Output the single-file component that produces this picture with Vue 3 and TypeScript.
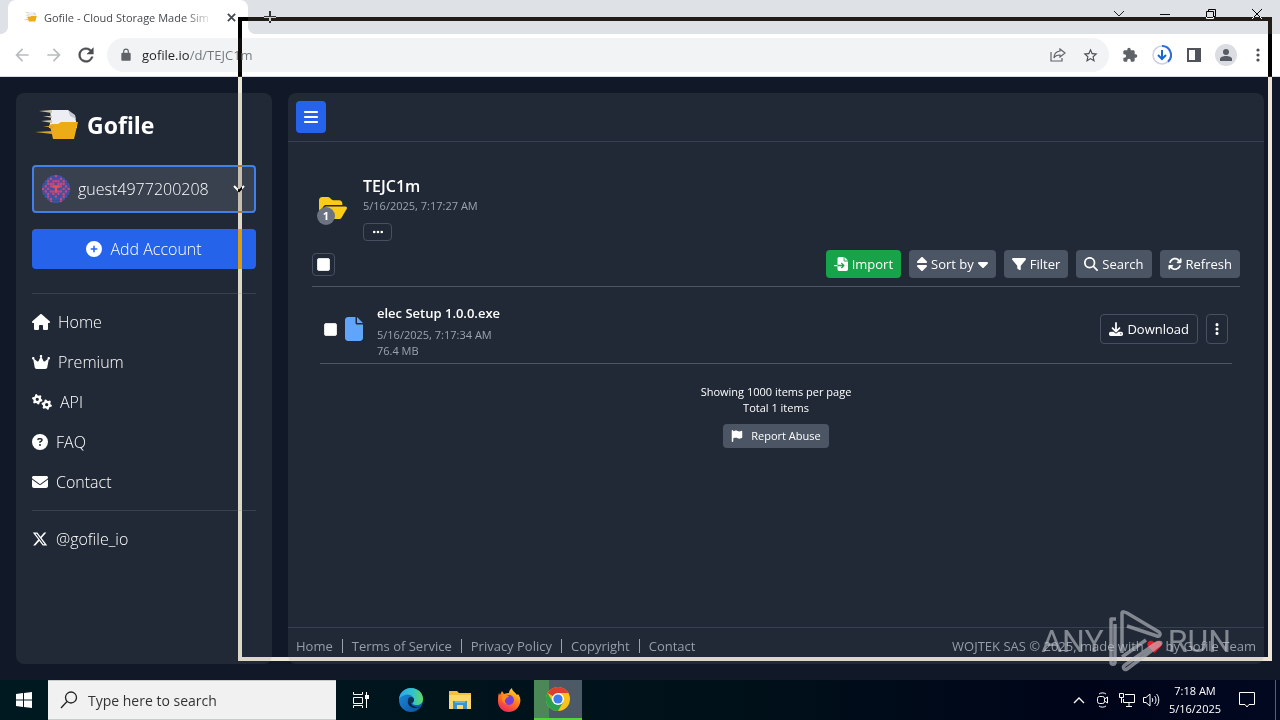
<script setup lang="ts">
import { h } from 'vue'

interface Glyph { w: number; d: string }

const glyphs: Record<string, Glyph> = {
  house: { w: 576, d: 'M575.8 255.5c0 18-15 32.1-32 32.1h-32l.7 160.2c0 2.7-.2 5.4-.5 8.1V472c0 22.1-17.9 40-40 40H456c-1.1 0-2.2 0-3.3-.1c-1.4 .1-2.8 .1-4.2 .1H416 392c-22.1 0-40-17.9-40-40V448 384c0-17.7-14.3-32-32-32H256c-17.7 0-32 14.3-32 32v64 24c0 22.1-17.9 40-40 40H160 128.1c-1.5 0-3-.1-4.5-.2c-1.2 .1-2.4 .2-3.6 .2H104c-22.1 0-40-17.9-40-40V360c0-.9 0-1.9 .1-2.8V287.6H32c-18 0-32-14-32-32.1c0-9 3-17 10-24L266.4 8c7-7 15-8 22-8s15 2 21 7L564.8 231.5c8 7 12 15 11 24z' },
  crown: { w: 576, d: 'M309 106c11.4-7 19-19.7 19-34c0-22.1-17.9-40-40-40s-40 17.9-40 40c0 14.4 7.6 27 19 34L209.7 220.6c-9.1 18.2-32.7 23.4-48.6 10.7L72 160c5-6.7 8-15 8-24c0-22.1-17.9-40-40-40S0 113.9 0 136s17.9 40 40 40c.2 0 .5 0 .7 0L86.4 427.4c5.5 30.4 32 52.6 63 52.6H426.6c30.9 0 57.4-22.1 63-52.6L535.3 176c.2 0 .5 0 .7 0c22.1 0 40-17.9 40-40s-17.9-40-40-40s-40 17.9-40 40c0 9 3 17.3 8 24l-89.1 71.3c-15.9 12.7-39.5 7.5-48.6-10.7L309 106z' },
  question: { w: 512, d: 'M256 512A256 256 0 1 0 256 0a256 256 0 1 0 0 512zM169.8 165.3c7.9-22.3 29.1-37.3 52.8-37.3h58.3c34.9 0 63.1 28.3 63.1 63.1c0 22.6-12.1 43.5-31.7 54.8L280 264.4c-.2 13-10.9 23.6-24 23.6c-13.3 0-24-10.7-24-24V250.5c0-8.6 4.6-16.5 12.1-20.8l44.3-25.4c4.7-2.7 7.6-7.7 7.6-13.1c0-8.4-6.8-15.1-15.1-15.1H222.6c-3.4 0-6.4 2.1-7.5 5.3l-.4 1.2c-4.4 12.5-18.2 19-30.6 14.6s-19-18.2-14.6-30.6l.4-1.2zM224 352a32 32 0 1 1 64 0 32 32 0 1 1 -64 0z' },
  envelope: { w: 512, d: 'M48 64C21.5 64 0 85.5 0 112c0 15.1 7.1 29.3 19.2 38.4L236.8 313.6c11.4 8.5 27 8.5 38.4 0L492.8 150.4c12.1-9.1 19.2-23.3 19.2-38.4c0-26.5-21.5-48-48-48H48zM0 176V384c0 35.3 28.7 64 64 64H448c35.3 0 64-28.7 64-64V176L294.4 339.2c-22.8 17.1-54 17.1-76.8 0L0 176z' },
  x: { w: 512, d: 'M389.2 48h70.6L305.6 224.2 487 464H345L233.7 318.6 106.5 464H35.8L200.7 275.5 26.8 48H172.4L272.9 180.9 389.2 48zM364.4 421.8h39.1L151.1 88h-42L364.4 421.8z' },
  plus: { w: 512, d: 'M256 512A256 256 0 1 0 256 0a256 256 0 1 0 0 512zM232 344V280H168c-13.3 0-24-10.7-24-24s10.7-24 24-24h64V168c0-13.3 10.7-24 24-24s24 10.7 24 24v64h64c13.3 0 24 10.7 24 24s-10.7 24-24 24H280v64c0 13.3-10.7 24-24 24s-24-10.7-24-24z' },
  bars: { w: 448, d: 'M0 96C0 78.3 14.3 64 32 64H416c17.7 0 32 14.3 32 32s-14.3 32-32 32H32C14.3 128 0 113.7 0 96zM0 256c0-17.7 14.3-32 32-32H416c17.7 0 32 14.3 32 32s-14.3 32-32 32H32c-17.7 0-32-14.3-32-32zM448 416c0 17.7-14.3 32-32 32H32c-17.7 0-32-14.3-32-32s14.3-32 32-32H416c17.7 0 32 14.3 32 32z' },
  sort: { w: 320, d: 'M137.4 41.4c12.5-12.5 32.8-12.5 45.3 0l128 128c9.2 9.2 11.9 22.9 6.9 34.9s-16.6 19.8-29.6 19.8H32c-12.9 0-24.6-7.8-29.6-19.8s-2.2-25.7 6.9-34.9l128-128zm0 429.3l-128-128c-9.2-9.2-11.9-22.9-6.9-34.9s16.6-19.8 29.6-19.8H288c12.9 0 24.6 7.8 29.6 19.8s2.2 25.7-6.9 34.9l-128 128c-12.5 12.5-32.8 12.5-45.3 0z' },
  caret: { w: 320, d: 'M137.4 374.6c12.5 12.5 32.8 12.5 45.3 0l128-128c9.2-9.2 11.9-22.9 6.9-34.9s-16.6-19.8-29.6-19.8L32 192c-12.9 0-24.6 7.8-29.6 19.8s-2.2 25.7 6.9 34.9l128 128z' },
  filter: { w: 512, d: 'M3.9 54.9C10.5 40.9 24.5 32 40 32H472c15.5 0 29.5 8.9 36.1 22.9s4.6 30.5-5.2 42.5L320 320.9V448c0 12.1-6.8 23.2-17.7 28.6s-23.8 4.3-33.5-3l-64-48c-8.1-6-12.8-15.5-12.8-25.6V320.9L9 97.3C-.7 85.4-2.8 68.8 3.9 54.9z' },
  search: { w: 512, d: 'M416 208c0 45.9-14.9 88.3-40 122.7L502.6 457.4c12.5 12.5 12.5 32.8 0 45.3s-32.8 12.5-45.3 0L330.7 376c-34.4 25.2-76.8 40-122.7 40C93.1 416 0 322.9 0 208S93.1 0 208 0S416 93.1 416 208zM208 352a144 144 0 1 0 0-288 144 144 0 1 0 0 288z' },
  refresh: { w: 512, d: 'M105.1 202.6c7.7-21.8 20.2-42.3 37.8-59.8c62.5-62.5 163.8-62.5 226.3 0L386.3 160H352c-17.7 0-32 14.3-32 32s14.3 32 32 32H463.5c0 0 0 0 0 0h.4c17.7 0 32-14.3 32-32V80c0-17.7-14.3-32-32-32s-32 14.3-32 32v35.2L414.4 97.6c-87.5-87.5-229.3-87.5-316.8 0C73.2 122 55.6 150.7 44.8 181.4c-5.9 16.7 2.9 34.9 19.5 40.8s34.9-2.9 40.8-19.5zM39 289.3c-5 1.5-9.8 4.2-13.7 8.2c-4 4-6.7 8.8-8.1 14c-.3 1.2-.6 2.5-.8 3.8c-.3 1.7-.4 3.4-.4 5.1V432c0 17.7 14.3 32 32 32s32-14.3 32-32V396.9l17.6 17.5 0 0c87.5 87.4 229.3 87.4 316.7 0c24.4-24.4 42.1-53.1 52.9-83.7c5.9-16.7-2.9-34.9-19.5-40.8s-34.9 2.9-40.8 19.5c-7.7 21.8-20.2 42.3-37.8 59.8c-62.5 62.5-163.8 62.5-226.3 0l-.1-.1L125.6 352H160c17.7 0 32-14.3 32-32s-14.3-32-32-32H48.4c-1.6 0-3.2 .1-4.8 .3s-3.1 .5-4.6 1z' },
  download: { w: 512, d: 'M288 32c0-17.7-14.3-32-32-32s-32 14.3-32 32V274.7l-73.4-73.4c-12.5-12.5-32.8-12.5-45.3 0s-12.5 32.8 0 45.3l128 128c12.5 12.5 32.8 12.5 45.3 0l128-128c12.5-12.5 12.5-32.8 0-45.3s-32.8-12.5-45.3 0L288 274.7V32zM64 352c-35.3 0-64 28.7-64 64v32c0 35.3 28.7 64 64 64H448c35.3 0 64-28.7 64-64V416c0-35.3-28.7-64-64-64H346.5l-45.3 45.3c-25 25-65.5 25-90.5 0L165.5 352H64zm368 56a24 24 0 1 1 0 48 24 24 0 1 1 0-48z' },
  file: { w: 384, d: 'M0 64C0 28.7 28.7 0 64 0H224V128c0 17.7 14.3 32 32 32H384V448c0 35.3-28.7 64-64 64H64c-35.3 0-64-28.7-64-64V64zm384 64H256V0L384 128z' },
  import: { w: 512, d: 'M128 64c0-35.3 28.7-64 64-64H352V128c0 17.7 14.3 32 32 32H512V448c0 35.3-28.7 64-64 64H192c-35.3 0-64-28.7-64-64V336H302.1l-39 39c-9.4 9.4-9.4 24.6 0 33.9s24.6 9.4 33.9 0l80-80c9.4-9.4 9.4-24.6 0-33.9l-80-80c-9.4-9.4-24.6-9.4-33.9 0s-9.4 24.6 0 33.9l39 39H128V64zm0 224v48H24c-13.3 0-24-10.7-24-24s10.7-24 24-24H128zM512 128H384V0L512 128z' },
  folder: { w: 576, d: 'M88.7 223.8L0 375.8V96C0 60.7 28.7 32 64 32H181.5c17 0 33.3 6.7 45.3 18.7l26.5 26.5c12 12 28.3 18.7 45.3 18.7H416c35.3 0 64 28.7 64 64v32H144c-22.8 0-43.8 12.1-55.3 31.8zm27.6 16.1C122.1 230 132.6 224 144 224H544c11.5 0 22 6.1 27.7 16.1s5.7 22.2-.1 32.1l-112 192C453.9 474 443.4 480 432 480H32c-11.5 0-22-6.1-27.7-16.1s-5.7-22.2 .1-32.1l112-192z' },
  flag: { w: 448, d: 'M64 32C64 14.3 49.7 0 32 0S0 14.3 0 32V64 368 480c0 17.7 14.3 32 32 32s32-14.3 32-32V352l64.3-16.1c41.1-10.3 84.6-5.5 122.5 13.4c44.2 22.1 95.5 24.8 141.7 7.4l34.7-13c12.5-4.7 20.8-16.6 20.8-30V66.1c0-23-24.2-38-44.8-27.7l-9.6 4.8c-46.3 23.2-100.8 23.2-147.1 0c-35.1-17.6-75.4-22-113.5-12.5L64 48V32z' },
  ellipsis: { w: 448, d: 'M8 256a56 56 0 1 1 112 0A56 56 0 1 1 8 256zm160 0a56 56 0 1 1 112 0 56 56 0 1 1 -112 0zm216-56a56 56 0 1 1 0 112 56 56 0 1 1 0-112z' },
  kebab: { w: 128, d: 'M64 360a56 56 0 1 0 0 112 56 56 0 1 0 0-112zm0-160a56 56 0 1 0 0 112 56 56 0 1 0 0-112zM120 96A56 56 0 1 0 8 96a56 56 0 1 0 112 0z' },
}

// One tooth-edged ring, centred on (cx, cy).
function gear(cx: number, cy: number): string {
  const pts: string[] = []
  for (let i = 0; i < 24; i++) {
    const r = i % 4 < 2 ? 168 : 125
    const a = (i / 24) * Math.PI * 2 + 0.13
    pts.push(`${(cx + r * Math.cos(a)).toFixed(0)} ${(cy + r * Math.sin(a)).toFixed(0)}`)
  }
  return `M${pts.join('L')}Z M${cx - 52} ${cy}a52 52 0 1 0 104 0a52 52 0 1 0 -104 0z`
}
glyphs.gears = { w: 640, d: gear(168, 170) + gear(470, 340) }

function Glyph(props: { name: string }) {
  const g = glyphs[props.name]
  return h('svg', { viewBox: `0 0 ${g.w} 512`, 'aria-hidden': 'true' }, [
    h('path', { d: g.d, fill: 'currentColor', 'fill-rule': 'evenodd' }),
  ])
}
Glyph.props = ['name']

const nav = [
  { icon: 'house', label: 'Home', size: 'g18' },
  { icon: 'crown', label: 'Premium', size: 'g18' },
  { icon: 'gears', label: 'API', size: 'g20' },
  { icon: 'question', label: 'FAQ', size: 'g16' },
  { icon: 'envelope', label: 'Contact', size: 'g16' },
]
const tools = [
  { icon: 'import', label: 'Import', caret: false },
  { icon: 'sort', label: 'Sort by', caret: true },
  { icon: 'filter', label: 'Filter', caret: false },
  { icon: 'search', label: 'Search', caret: false },
  { icon: 'refresh', label: 'Refresh', caret: false },
]
const footerLinks = ['Home', 'Terms of Service', 'Privacy Policy', 'Copyright', 'Contact']
const identicon = [
  '...xxoxx...', '..xoxxxox..', '.xoxoooxox.', 'xxoooxoooxx', 'xoxoxxxoxox', 'oxoxxxxxoxo',
  'xoxooxooxox', 'xxoxoxoxoxx', '.xoxxoxxox.', '..xoxxxox..', '...oxxxo...',
].flatMap((row, y) => [...row].map((c, x) => ({ x, y, c })).filter((p) => p.c !== '.'))
</script>

<template>
  <div class="desktop">
    <header class="tabs">
      <div class="tab">
        <svg class="favicon" viewBox="0 0 44 32"><use href="#gofile-mark" /></svg>
        <span class="tab-title">Gofile - Cloud Storage Made Sim</span>
        <button class="bare" aria-label="Close tab"><svg width="9" height="9" viewBox="0 0 10 10"><path d="M1 1l8 8M9 1l-8 8" stroke="#45494d" stroke-width="2" /></svg></button>
      </div>
      <button class="bare new-tab" aria-label="New tab"><svg width="12" height="12" viewBox="0 0 12 12"><path d="M6 0v12M0 6h12" stroke="#333" stroke-width="2" /></svg></button>
      <div class="window-buttons">
        <button class="bare" aria-label="Search tabs"><svg width="12" height="12" viewBox="0 0 12 12"><path d="M1 3l5 5 5-5" fill="none" stroke="#222" /></svg></button>
        <button class="bare" aria-label="Minimize"><svg width="12" height="12" viewBox="0 0 12 12"><path d="M1 6.500h10" stroke="#111" /></svg></button>
        <button class="bare" aria-label="Restore"><svg width="12" height="12" viewBox="0 0 12 12"><path d="M1.500 3.500h7v7h-7zM3.500 3V1.500h7v7H9" fill="none" stroke="#000" /></svg></button>
        <button class="bare" aria-label="Close"><svg width="12" height="12" viewBox="0 0 12 12"><path d="M1 1l10 10M11 1L1 11" stroke="#000" /></svg></button>
      </div>
    </header>

    <div class="toolbar">
      <button class="bare" aria-label="Back"><svg width="20" height="20" viewBox="0 0 24 24"><path fill="#b9bcbf" d="M20 11H7.830l5.590-5.590L12 4l-8 8 8 8 1.410-1.410L7.830 13H20z" /></svg></button>
      <button class="bare" aria-label="Forward"><svg width="20" height="20" viewBox="0 0 24 24"><path fill="#b9bcbf" d="M4 11h12.170l-5.590-5.590L12 4l8 8-8 8-1.410-1.410L16.170 13H4z" /></svg></button>
      <button class="bare" aria-label="Reload"><svg width="22" height="22" viewBox="0 0 24 24"><path fill="#4a4d51" stroke="#4a4d51" stroke-width=".5" d="M17.650 6.350A7.958 7.958 0 0 0 12 4a8 8 0 1 0 7.730 10h-2.080A6 6 0 1 1 12 6c1.660 0 3.140.69 4.220 1.780L13 11h7V4z" /></svg></button>
      <div class="omnibox">
        <svg width="14" height="14" viewBox="0 0 24 24"><path fill="#5f6368" d="M18 8h-1V6A5 5 0 0 0 7 6v2H6a2 2 0 0 0-2 2v10c0 1.100.9 2 2 2h12a2 2 0 0 0 2-2V10a2 2 0 0 0-2-2zM9 6a3 3 0 0 1 6 0v2H9z" /></svg>
        <input class="url" aria-label="Address and search bar" value="gofile.io/d/TEJC1m">
        <button class="bare" aria-label="Share"><svg width="16" height="16" viewBox="0 0 16 16"><path d="M1 5v9h11v-3M10 2l5 4-5 4V8c-3 0-5 1-6 3 0-4 2-6.500 6-7z" fill="none" stroke="#5f6368" stroke-width="1.200" /></svg></button>
        <button class="bare" aria-label="Bookmark this tab"><svg width="17" height="17" viewBox="0 0 24 24"><path fill="#4d5156" d="M22 9.240l-7.190-.62L12 2 9.190 8.630 2 9.240l5.460 4.730L5.820 21 12 17.270 18.180 21l-1.630-7.030zM12 15.400l-3.760 2.270 1-4.280-3.320-2.880 4.380-.38L12 6.100l1.710 4.040 4.380.38-3.320 2.880 1 4.280z" /></svg></button>
      </div>
      <button class="bare" aria-label="Extensions"><svg width="16" height="16" viewBox="0 0 24 24"><path fill="#5f6368" d="M20.500 11H19V7c0-1.100-.9-2-2-2h-4V3.500a2.500 2.500 0 0 0-5 0V5H4c-1.100 0-2 .9-2 2v3.800h1.500a2.700 2.700 0 0 1 0 5.400H2V20c0 1.100.9 2 2 2h3.800v-1.500a2.700 2.700 0 0 1 5.400 0V22H17c1.100 0 2-.9 2-2v-4h1.500a2.500 2.500 0 0 0 0-5z" /></svg></button>
      <button class="bare" aria-label="Downloads"><svg width="20" height="20" viewBox="0 0 20 20" fill="none"><circle cx="10" cy="10" r="9" stroke="#cfd0e4" stroke-width="1.500" /><path d="M10 1a9 9 0 0 1 6 15.700" stroke="#2e6bdc" stroke-width="2" /><path d="M10 5v9M6 10l4 4 4-4" stroke="#1a67d2" stroke-width="2" /></svg></button>
      <button class="bare" aria-label="Side panel"><svg width="14" height="14" viewBox="0 0 14 14"><path fill="#50545a" fill-rule="evenodd" d="M0 0h14v14H0zM2 2v10h6V2z" /></svg></button>
      <button class="bare" aria-label="Profile"><svg width="22" height="22" viewBox="0 0 22 22"><circle cx="11" cy="11" r="11" fill="#dcdde3" /><circle cx="11" cy="8" r="3" fill="#565b65" /><path d="M5 17v-2c0-4 12-4 12 0v2z" fill="#565b65" /></svg></button>
      <button class="bare" aria-label="Menu"><svg width="4" height="14" viewBox="0 0 4 14" fill="#4a4d51"><circle cx="2" cy="2" r="1.600" /><circle cx="2" cy="7" r="1.600" /><circle cx="2" cy="12" r="1.600" /></svg></button>
    </div>

    <div class="page">
      <aside class="card sidebar">
        <a class="brand" href="#">
          <svg class="brand-mark" viewBox="0 0 44 32">
            <g id="gofile-mark">
              <path d="M15 1h18l7 7 2 8v3H14l2-9z" fill="#eceef3" />
              <path d="M33 1l2 6 6 3-1-4z" fill="#c6c9d2" />
              <path d="M4 2l13-1v3zM6 12l11-1v3zM8 7l9 0v2z" fill="#cfc49c" />
              <path d="M14 16l3-1h6l3-2h17l-4 17H18l-2-9z" fill="#ecac17" />
              <path d="M0 23l17-1v3zM8 17l10 0v2z" fill="#d8a222" />
            </g>
          </svg>
          <span>Gofile</span>
        </a>
        <button class="account">
          <svg class="avatar" viewBox="0 0 11 11"><rect v-for="p in identicon" :key="`${p.x}-${p.y}`" :x="p.x" :y="p.y" width="1" height="1" :fill="p.c === 'x' ? '#3c55b0' : '#c04a86'" /><path d="M4 4h3v1H6v2H5V5H4z" fill="#e8505e" /></svg>
          <span class="account-name">guest4977200208</span>
          <svg width="12" height="8" viewBox="0 0 12 8"><path d="M1 1l5 5 5-5" fill="none" stroke="#fff" stroke-width="2" /></svg>
        </button>
        <button class="add"><Glyph class="g16" name="plus" />Add Account</button>
        <hr class="rule">
        <nav class="nav">
          <a v-for="n in nav" :key="n.label" href="#"><Glyph :class="n.size" :name="n.icon" />{{ n.label }}</a>
        </nav>
        <hr class="rule lower">
        <nav class="nav"><a href="#"><Glyph class="g16" name="x" />@gofile_io</a></nav>
      </aside>

      <main class="card main">
        <div class="main-head"><button class="menu" aria-label="Toggle sidebar"><Glyph class="g16" name="bars" /></button></div>
        <div class="content">
          <section class="folder">
            <div class="folder-icon"><Glyph class="folder-glyph" name="folder" /><span class="count">1</span></div>
            <div class="folder-text">
              <h1>TEJC1m</h1>
              <p>5/16/2025, 7:17:27 AM</p>
              <button class="outline more" aria-label="More"><Glyph class="g12" name="ellipsis" /></button>
            </div>
          </section>
          <div class="actions">
            <label class="outline pick-all"><input type="checkbox" aria-label="Select all"></label>
            <div class="action-list">
              <button v-for="t in tools" :key="t.label" class="tool" :class="{ green: t.icon === 'import' }">
                <Glyph :class="t.icon === 'sort' ? 'g-sort' : 'g14'" :name="t.icon" />{{ t.label }}<Glyph v-if="t.caret" class="g-sort" name="caret" />
              </button>
            </div>
          </div>
          <article class="item">
            <input type="checkbox" aria-label="Select elec Setup 1.0.0.exe">
            <Glyph class="file-glyph" name="file" />
            <div class="item-text">
              <a href="#">elec Setup 1.0.0.exe</a>
              <p>5/16/2025, 7:17:34 AM</p>
              <p>76.4 MB</p>
            </div>
            <button class="outline download"><Glyph class="g14" name="download" />Download</button>
            <button class="outline kebab" aria-label="File menu"><Glyph class="g14 thin" name="kebab" /></button>
          </article>
          <div class="summary">
            <p>Showing 1000 items per page</p>
            <p>Total 1 items</p>
            <button class="report"><Glyph class="g12" name="flag" />Report Abuse</button>
          </div>
        </div>
        <footer class="footer">
          <nav><template v-for="(l, i) in footerLinks" :key="l"><i v-if="i" class="bar" /><a href="#">{{ l }}</a></template></nav>
          <p>WOJTEK SAS © 2025, made with <svg class="heart" viewBox="0 0 16 14" aria-label="love"><path d="M8 14L1 7C-2 2 5-2 8 3c3-5 10-1 7 4z" fill="#e5202b" /></svg> by Gofile Team</p>
        </footer>
      </main>
    </div>

    <footer class="taskbar">
      <button class="bare start" aria-label="Start"><svg width="16" height="16" viewBox="0 0 16 16"><path fill="#fff" d="M0 2l7-1v6.500H0zM8 1l8-1v7.500H8zM0 8.500h7V15l-7-1zM8 8.500h8V16l-8-1z" /></svg></button>
      <label class="task-search">
        <svg width="18" height="18" viewBox="0 0 18 18"><circle cx="11" cy="6.500" r="5.500" fill="none" stroke="#222" stroke-width="1.300" /><path d="M7 10.500L1 17" stroke="#222" stroke-width="1.300" /></svg>
        <input type="search" aria-label="Search" placeholder="Type here to search">
      </label>
      <button class="bare app wide" aria-label="Task view"><svg width="18" height="16" viewBox="0 0 18 16"><path d="M1.500 0v2.500h9V0M1.500 5.500h9v6h-9zM1.500 16v-2.500h9V16M14.500 0v3M14.500 7v9" fill="none" stroke="#fff" /><path d="M13 3h4v4h-4z" fill="#fff" /></svg></button>
      <button class="bare app" aria-label="Edge">
        <svg width="24" height="24" viewBox="0 0 24 24">
          <defs>
            <linearGradient id="edge-top" x1="0" x2="1"><stop offset="0" stop-color="#2ba8e8" /><stop offset=".6" stop-color="#35c4c8" /><stop offset="1" stop-color="#65d956" /></linearGradient>
            <linearGradient id="edge-low" x1="0" y1="0" x2="1" y2="1"><stop offset="0" stop-color="#1b91dd" /><stop offset="1" stop-color="#0d4b9d" /></linearGradient>
          </defs>
          <circle cx="12" cy="12" r="12" fill="url(#edge-low)" />
          <path d="M0 11C1 4 6 0 12 0c7 0 12 5 12 11 0 4-3 6-6 6-4 0-5-1-4-3 3-5-4-9-8-7-3 1-5 2-6 4z" fill="url(#edge-top)" />
          <path d="M9 12c-1 4 2 8 7 8 3 0 5-1 6-2-1 1-3 1.500-5 1-4-1-6-4-5-7z" fill="#05263c" />
          <circle cx="12" cy="12" r="3" fill="#073455" />
        </svg>
      </button>
      <button class="bare app" aria-label="File Explorer"><svg width="22" height="19" viewBox="0 0 22 19"><path d="M0 0h8l2 2h12v16H0z" fill="#f5bf3e" /><path d="M0 4h22v14H0z" fill="#fbd869" /><path d="M4 10h14v8h-4v-4H8v4H4z" fill="#3c94cf" /><path d="M6 10h10v2H6z" fill="#66b6df" /></svg></button>
      <button class="bare app" aria-label="Firefox">
        <svg width="24" height="24" viewBox="0 0 24 24">
          <defs><linearGradient id="fox" x1=".8" y1="0" x2=".3" y2="1"><stop offset="0" stop-color="#ffe226" /><stop offset=".5" stop-color="#ff7b1c" /><stop offset="1" stop-color="#f0255f" /></linearGradient></defs>
          <path d="M2 5l1 2 2-4 2 3c2-1 4-1 5-1 0-3 2-4 3-5 0 3 3 4 5 7l1-1c2 3 3 5 2 9-1 5-6 9-11 9C5 24 1 19 1 13c0-3 0-5 1-8z" fill="url(#fox)" />
          <circle cx="12" cy="12" r="5" fill="#7640d8" /><path d="M5 7c3-1 6 0 7 2-2 0-3 1-3 2-2 1-1 4 1 5-4 0-6-4-5-9z" fill="#ff8a1e" />
        </svg>
      </button>
      <button class="bare app active" aria-label="Chrome">
        <svg width="24" height="24" viewBox="0 0 24 24"><circle cx="12" cy="12" r="12" fill="#fbc318" /><path d="M12 12L1.600 6A12 12 0 0 1 22.400 6H12z" fill="#df3d2f" /><path d="M1.600 6a12 12 0 0 0 10.400 18l5.200-9L12 12 6.800 15z" fill="#2ba14b" /><circle cx="12" cy="12" r="6" fill="#fff" /><circle cx="12" cy="12" r="4.600" fill="#3c7df0" /></svg>
      </button>
      <div class="tray">
        <button class="bare" aria-label="Hidden icons"><svg width="12" height="8" viewBox="0 0 12 8"><path d="M1 7l5-5 5 5" fill="none" stroke="#fff" stroke-width="1.300" /></svg></button>
        <button class="bare" aria-label="Meet now"><svg width="14" height="16" viewBox="0 0 14 16" fill="none" stroke="#fff"><rect x="1.500" y="4.500" width="7" height="7" rx="2" /><path d="M8.500 7l3-2v6l-3-2M3 2c2-1.500 5-1.500 7 0M3 14c2 1.500 5 1.500 7 0" /></svg></button>
        <button class="bare" aria-label="Network"><svg width="16" height="14" viewBox="0 0 16 14" fill="none" stroke="#fff"><path d="M6 1.500h9.500v8H4.500V6M7 13.500h6M10 10v3M.5.500h4v4h-4zM2.500 5v5" /></svg></button>
        <button class="bare" aria-label="Volume"><svg width="17" height="14" viewBox="0 0 17 14" fill="none" stroke="#fff"><path d="M.500 4.500H3l4-3.500v12L3 9.500H.500zM9 5c1 1 1 3 0 4M11.500 3c2 2 2 6 0 8M13.500 1c3 3 3 9 0 12" /></svg></button>
        <time class="clock"><span>7:18 AM</span><span>5/16/2025</span></time>
        <button class="bare notes" aria-label="Notifications"><svg width="16" height="16" viewBox="0 0 16 16"><path d="M.500.500h15v12H10L8 15l-2-2.500H.500z" fill="none" stroke="#fff" /></svg></button>
        <i class="peek" />
      </div>
    </footer>

    <div class="selection" />
    <div class="watermark" aria-hidden="true">
      <span>ANY</span>
      <svg width="56" height="62" viewBox="0 0 56 62"><g fill="none" stroke="#c3c6cc" stroke-width="3.500" stroke-linejoin="round"><path d="M8 9l-5 0v43c0 3 4 3 4 0V14M14 27V3c0-2 3-1 5 0l32 19c2 2 1 5-2 4L19 16M14 27v16" /><path d="M51 35L19 59c-3 2-5-2-2-4l30-21c5-3 8-1 4 1zM14 47l24-17" /></g></svg>
      <span>RUN</span>
    </div>
  </div>
</template>

<style>
body { background: #111827; }
</style>

<style scoped>
* { box-sizing: border-box; }
.desktop { position: relative; display: flex; flex-direction: column; height: 100vh; overflow: hidden; color: #fff; font-family: "Open Sans", "Noto Sans", sans-serif; isolation: isolate; }
button, input { font: inherit; color: inherit; }
button { display: inline-flex; align-items: center; justify-content: center; border: 0; padding: 0; cursor: pointer; }
.bare { background: none; }
a { color: inherit; text-decoration: none; }
p, h1 { margin: 0; }
svg { display: block; flex: none; }

.tabs { display: flex; height: 34px; padding-left: 8px; background: #dee1e6; color: #45494d; }
.tab { position: relative; display: flex; align-items: center; gap: 7px; width: 240px; padding: 0 12px 0 15px; background: #fff; border-radius: 8px 8px 0 0; }
.tab::before, .tab::after { content: ""; position: absolute; bottom: 0; width: 8px; height: 8px; }
.tab::before { left: -8px; background: radial-gradient(circle at 0 0, transparent 8px, #fff 8px); }
.tab::after { right: -8px; background: radial-gradient(circle at 100% 0, transparent 8px, #fff 8px); }
.favicon { width: 14px; height: 12px; }
.tab-title { flex: 1; overflow: hidden; white-space: nowrap; font-size: 11px; mask-image: linear-gradient(90deg, #000 80%, transparent 96%); }
.new-tab { width: 44px; }
.window-buttons { display: flex; align-items: center; margin-left: auto; height: 28px; }
.window-buttons button { width: 46px; }

.toolbar { display: flex; align-items: center; gap: 10px; height: 43px; padding: 0 20px 0 11px; background: #fff; border-bottom: 1px solid #d7dbe0; }
.toolbar > button { width: 22px; }
.toolbar > button:last-child { width: 4px; margin-left: 9px; }
.omnibox { display: flex; flex: 1; align-items: center; gap: 16px; height: 34px; padding: 0 10px 0 12px; border-radius: 17px; background: #f1f3f4; }
.url { flex: 1; min-width: 0; margin-left: -7px; padding: 0; border: 0; outline: 0; font-size: 13px; color: transparent; background: linear-gradient(90deg, #202124 48px, #70757a 48px); background-clip: text; }

.page { display: flex; flex: 1; gap: 16px; min-height: 0; padding: 16px; background: #111827; }
.card { border-radius: 8px; background: #212936; }
.sidebar { width: 256px; padding: 16px; }
.brand { display: flex; align-items: center; gap: 8px; height: 32px; padding-left: 3px; font-size: 23px; font-weight: 700; }
.brand-mark { width: 44px; height: 32px; }
.account { display: flex; gap: 8px; width: 100%; height: 48px; margin-top: 24px; padding: 0 9px 0 8px; border: 2px solid #4080e8; border-radius: 4px; background: #39414f; font-size: 16px; font-weight: 300; }
.avatar { width: 28px; height: 28px; border-radius: 50%; }
.account-name { flex: 1; text-align: left; }
.add { gap: 8px; width: 100%; height: 40px; margin-top: 16px; border-radius: 4px; background: #2563eb; font-size: 16px; font-weight: 300; }
.rule { height: 1px; margin: 24px 0 8px; border: 0; background: #394150; }
.rule.lower { margin: 8px 0; }
.nav { display: flex; flex-direction: column; }
.nav a { display: flex; align-items: center; gap: 8px; height: 40px; font-size: 16px; font-weight: 300; }
.g20 { width: 20px; height: 16px; }
.g18 { width: 18px; height: 16px; }
.g16 { width: 16px; height: 16px; }
.g14 { width: 14px; height: 14px; }
.g12 { width: 12px; height: 12px; }
.g-sort { width: 10px; height: 16px; }
.thin { width: 4px; }

.main { display: flex; flex: 1; flex-direction: column; min-width: 0; }
.main-head { height: 49px; padding: 8px; border-bottom: 1px solid #364050; }
.menu { width: 30px; height: 32px; border-radius: 4px; background: #2563eb; }
.content { flex: 1; min-height: 0; padding: 34px 24px 0; }
.folder { display: flex; align-items: center; gap: 16px; padding-left: 7px; height: 66px; }
.folder-icon { position: relative; width: 28px; margin-bottom: 2px; }
.folder-glyph { width: 28px; height: 26px; color: #facc15; }
.count { position: absolute; left: -2px; bottom: -4px; width: 18px; height: 18px; border-radius: 50%; background: #6b7280; font-size: 11px; line-height: 18px; font-weight: 700; text-align: center; }
.folder-text { height: 66px; }
.folder-text h1 { font-size: 16px; line-height: 20px; font-weight: 600; }
.folder-text p, .item-text p { color: #9ca3af; font-size: 11px; line-height: 16px; }
.folder-text p { line-height: 20px; }
.outline { border: 1px solid #465060; border-radius: 4px; background: none; }
.more { width: 29px; height: 18px; margin-top: 7px; }
.actions { display: flex; align-items: center; justify-content: space-between; height: 45px; border-bottom: 1px solid #4b5563; }
.pick-all { display: flex; width: 23px; height: 23px; align-items: center; justify-content: center; }
input[type="checkbox"] { appearance: none; width: 13px; height: 13px; margin: 0; border: 1px solid #e3e3e3; border-radius: 2px; background: #fff; }
.action-list { display: flex; gap: 8px; }
.tool { gap: 4px; height: 28px; padding: 0 8px; border-radius: 4px; background: #4b5563; font-size: 13px; white-space: nowrap; }
.green { background: #16a34a; }
.item { display: flex; align-items: center; gap: 8px; height: 69px; margin: 8px 8px 0; padding-left: 4px; border-bottom: 1px solid #4b5563; }
.file-glyph { width: 18px; height: 24px; color: #60a5fa; }
.item-text { flex: 1; margin-left: 6px; }
.item-text a { display: block; padding-top: 4px; font-size: 13px; line-height: 20px; margin-bottom: 4px; font-weight: 600; }
.download { gap: 4px; height: 30px; padding: 0 8px; font-size: 13px; }
.kebab { width: 22px; height: 30px; margin-right: 4px; }
.summary { display: flex; flex-direction: column; align-items: center; padding-top: 20px; font-size: 11px; line-height: 16px; }
.report { gap: 8px; height: 24px; margin-top: 8px; padding: 0 8px; border-radius: 4px; background: #4b5563; }
.footer { display: flex; align-items: center; justify-content: space-between; height: 37px; padding: 0 8px; border-top: 1px solid #364050; color: #969da9; font-size: 13px; }
.footer nav { display: flex; align-items: center; gap: 9px; }
.bar { width: 1px; height: 14px; background: #9ca3af; }
.footer p { white-space: nowrap; }
.heart { display: inline-block; width: 15px; height: 13px; vertical-align: -2px; }

.taskbar { display: flex; height: 40px; background: linear-gradient(90deg, #001920, #001019 60%, #000419 85%, #010820); }
.start { width: 48px; }
.task-search { display: flex; align-items: center; gap: 10px; width: 288px; padding-left: 12px; border: 1px solid #c9cccd; border-left: 0; border-right: 0; background: #f1f1f1; color: #222; }
.task-search input { flex: 1; min-width: 0; padding: 0; border: 0; outline: 0; background: none; font-size: 14px; }
.task-search input::placeholder { color: #333; opacity: 1; }
.app { width: 48px; margin-right: 1px; }
.wide { width: 50px; }
.active { background: linear-gradient(90deg, #4b8757 15px, #4b5a66 15px); border-bottom: 2px solid #52d43c; }
.tray { display: flex; align-items: center; margin-left: auto; padding-right: 4px; }
.tray button { width: 24px; }
.clock { display: flex; flex-direction: column; width: 64px; text-align: center; font-size: 11px; line-height: 18px; }
.tray .notes { width: 40px; margin-right: 8px; }
.peek { width: 1px; height: 40px; background: #59606c; }

.selection { position: absolute; inset: 17px 8px 59px 238px; border: 4px solid #fff; mix-blend-mode: difference; pointer-events: none; }
.watermark { position: absolute; right: 49px; bottom: 48px; display: flex; align-items: center; gap: 4px; opacity: .6; color: #c3c6cc; font: 400 32px/62px Roboto, sans-serif; pointer-events: none; }
</style>
